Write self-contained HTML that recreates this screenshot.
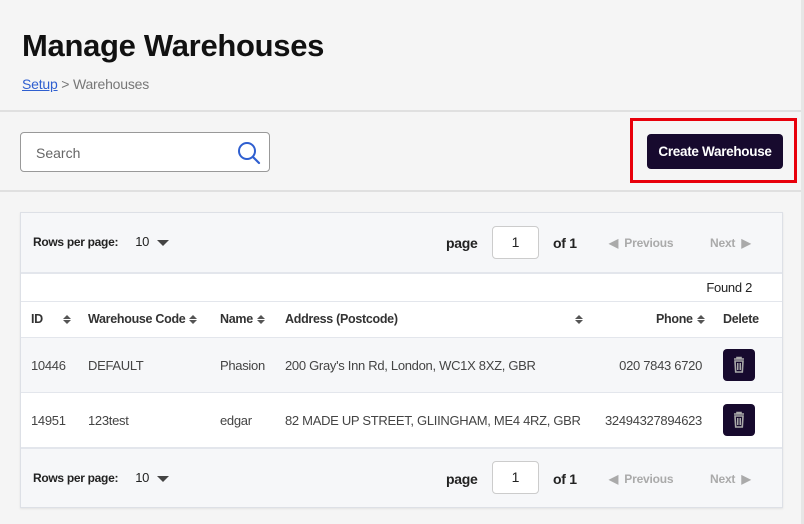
<!DOCTYPE html>
<html><head><meta charset="utf-8"><style>
*{box-sizing:border-box;margin:0;padding:0}
body{width:804px;height:524px;background:#f5f5f5;font-family:"Liberation Sans",sans-serif;color:#222;position:relative;overflow:hidden}
.a{position:absolute}
h1{position:absolute;left:22px;top:28px;font-size:31px;font-weight:bold;color:#111;letter-spacing:-0.3px}
.bc{left:22px;top:76px;font-size:14px;color:#777;letter-spacing:-0.2px}
.bc span{color:#2f5fd0;text-decoration:underline}
.hr{left:0;width:804px;height:2px;background:#e0e0e0}
.search{left:20px;top:132px;width:250px;height:40px;border:1px solid #999;border-radius:4px;background:#fff;font-size:14px;color:#666;padding:12px 15px}
.red{left:630px;top:118px;width:167px;height:65px;border:3px solid #e8000b}
.btn{left:647px;top:134px;width:136px;height:35px;background:#170a2e;color:#fff;border-radius:4px;font-size:13.5px;font-weight:bold;text-align:center;line-height:35px;letter-spacing:-0.3px}
.card{left:20px;top:212px;width:763px;height:296px;border:1px solid #dde0e6;background:#fff;box-shadow:0 1px 2px rgba(0,0,0,.08)}
.pg{left:0;width:761px;height:59px;background:#f6f7f9;font-size:12px}
.rpp{left:12px;top:21px;font-weight:bold;font-size:12px;letter-spacing:-0.3px}
.rpp b{font-weight:normal;margin-left:14px;font-size:13px}
.tri{display:inline-block;width:0;height:0;border-left:6px solid transparent;border-right:6px solid transparent;border-top:6px solid #444;margin-left:8px;vertical-align:middle}
.pw{left:425px;top:22px;font-size:14px;font-weight:bold;letter-spacing:-0.3px}
.pbox{left:471px;top:13px;width:47px;height:33px;border:1px solid #ccc;border-radius:4px;background:#fff;text-align:center;line-height:31px;font-size:14px}
.of{left:532px;top:22px;font-size:14px;font-weight:bold;letter-spacing:-0.3px}
.prev{left:588px;top:23px;font-size:12px;color:#aaa;font-weight:bold;letter-spacing:-0.2px}
.next{left:689px;top:23px;font-size:12px;color:#aaa;font-weight:bold;letter-spacing:-0.2px}
.line{left:0;width:761px;height:2px;background:#e3e6ec}
.cell{font-size:13px;color:#444;letter-spacing:-0.3px;white-space:nowrap}
.th{font-size:12.5px;font-weight:bold;color:#333;letter-spacing:-0.3px;white-space:nowrap}
.srt{display:inline-block;width:10px;vertical-align:middle;margin-left:4px;font-size:0}
.srt i{display:block;width:0;height:0;border-left:4px solid transparent;border-right:4px solid transparent;margin:1px 0}
.del{width:32px;height:32px;background:#170a2e;border-radius:4px}
</style></head><body>
<h1>Manage Warehouses</h1>
<div class="a bc"><span>Setup</span> &gt; Warehouses</div>
<div class="a hr" style="top:110px"></div>
<div class="a hr" style="top:190px"></div>
<div class="a" style="left:801px;top:0;width:3px;height:524px;background:#e6e6e6"></div>
<div class="a search">Search</div>
<svg class="a" style="left:236px;top:140px" width="26" height="26" viewBox="0 0 26 26"><circle cx="11" cy="11" r="8" fill="none" stroke="#2f5fd0" stroke-width="2"/><path d="M17 17L23 23" stroke="#2f5fd0" stroke-width="2.2" stroke-linecap="round"/></svg>
<div class="a red"></div>
<div class="a btn">Create Warehouse</div>

<div class="a card">
 <div class="a pg" style="top:0">
  <div class="a rpp">Rows per page: <b>10</b><span class="tri"></span></div>
  <div class="a pw">page</div><div class="a pbox">1</div><div class="a of">of 1</div>
  <div class="a prev">◀&nbsp; Previous</div><div class="a next">Next &nbsp;▶</div>
 </div>
 <div class="a line" style="top:59px"></div>
 <div class="a" style="left:0;top:61px;width:761px;height:27px;background:#fff"></div>
 <div class="a cell" style="right:30px;top:67px;color:#222">Found 2</div>
 <div class="a line" style="top:88px;height:1px"></div>
 <div class="a th" style="left:10px;top:99px">ID<span class="srt" style="margin-left:20px"><i style="border-bottom:4px solid #555"></i><i style="border-top:4px solid #555"></i></span></div>
 <div class="a th" style="left:67px;top:99px">Warehouse Code<span class="srt"><i style="border-bottom:4px solid #555"></i><i style="border-top:4px solid #555"></i></span></div>
 <div class="a th" style="left:199px;top:99px">Name<span class="srt"><i style="border-bottom:4px solid #555"></i><i style="border-top:4px solid #555"></i></span></div>
 <div class="a th" style="left:264px;top:99px">Address (Postcode)</div>
 <div class="a th" style="left:550px;top:99px"><span class="srt"><i style="border-bottom:4px solid #555"></i><i style="border-top:4px solid #555"></i></span></div>
 <div class="a th" style="left:635px;top:99px">Phone<span class="srt"><i style="border-bottom:4px solid #555"></i><i style="border-top:4px solid #555"></i></span></div>
 <div class="a th" style="left:702px;top:99px">Delete</div>
 <div class="a line" style="top:124px;height:1px"></div>
 <div class="a" style="left:0;top:125px;width:761px;height:54px;background:#f6f7f9"></div>
 <div class="a line" style="top:179px;height:1px"></div>
 <div class="a cell" style="left:10px;top:145px">10446</div>
 <div class="a cell" style="left:67px;top:145px">DEFAULT</div>
 <div class="a cell" style="left:199px;top:145px">Phasion</div>
 <div class="a cell" style="left:264px;top:145px">200 Gray's Inn Rd, London, WC1X 8XZ, GBR</div>
 <div class="a cell" style="right:80px;top:145px">020 7843 6720</div>
 <div class="a del" style="left:702px;top:136px"><svg width="32" height="32" viewBox="0 0 32 32"><path d="M11 10h10M14 10V8.5h4V10M12 12h8l-.7 11h-6.6z" fill="none" stroke="#aaa" stroke-width="1.6"/><path d="M14.5 14v7M16 14v7M17.5 14v7" stroke="#aaa" stroke-width="1"/></svg></div>
 <div class="a cell" style="left:10px;top:200px">14951</div>
 <div class="a cell" style="left:67px;top:200px">123test</div>
 <div class="a cell" style="left:199px;top:200px">edgar</div>
 <div class="a cell" style="left:264px;top:200px">82 MADE UP STREET, GLIINGHAM, ME4 4RZ, GBR</div>
 <div class="a cell" style="right:80px;top:200px">32494327894623</div>
 <div class="a del" style="left:702px;top:191px"><svg width="32" height="32" viewBox="0 0 32 32"><path d="M11 10h10M14 10V8.5h4V10M12 12h8l-.7 11h-6.6z" fill="none" stroke="#aaa" stroke-width="1.6"/><path d="M14.5 14v7M16 14v7M17.5 14v7" stroke="#aaa" stroke-width="1"/></svg></div>
 <div class="a line" style="top:234px"></div>
 <div class="a pg" style="top:236px;height:58px">
  <div class="a rpp" style="top:21px">Rows per page: <b>10</b><span class="tri"></span></div>
  <div class="a pw" style="top:22px">page</div><div class="a pbox" style="top:12px">1</div><div class="a of" style="top:22px">of 1</div>
  <div class="a prev" style="top:23px">◀&nbsp; Previous</div><div class="a next" style="top:23px">Next &nbsp;▶</div>
 </div>
</div>
</body></html>
